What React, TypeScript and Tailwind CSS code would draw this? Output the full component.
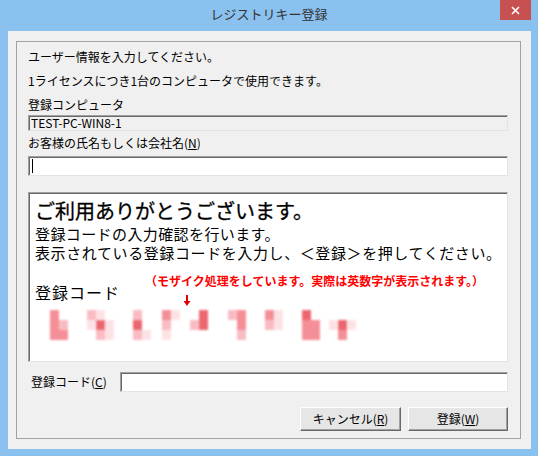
import React from "react"

const D = "#ec6670"
const M = "#f48f98"
const L = "#f9bcc3"
const V = "#fde2e5"

// mosaic glyphs: [x offset, [col, row, colour][]]
const glyphs: [number, [number, number, string][]][] = [
  [6, [[0, 0, M], [0, 1, M], [0, 2, M], [1, 1, L], [1, 2, M]]],
  [43, [[0, 0, L], [1, 0, V], [0, 1, V], [1, 1, D], [2, 1, V], [1, 2, L], [2, 2, V]]],
  [89, [[0, 0, L], [0, 1, D], [0, 2, L], [1, 2, V]]],
  [118, [[0, 0, M], [1, 0, V], [0, 1, L], [0, 2, V]]],
  [146, [[0, 1, L], [1, 0, D], [1, 1, D]]],
  [184, [[0, 0, L], [1, 0, M], [1, 1, M], [1, 2, L]]],
  [221, [[0, 0, M], [1, 0, V], [0, 1, L], [1, 1, V]]],
  [258, [[0, 0, D], [0, 1, M], [0, 2, M], [1, 1, M], [1, 2, M]]],
  [294, [[0, 1, D], [0, 2, M], [-1, 1, V], [1, 1, V]]],
]

function Mosaic() {
  return (
    <svg width="320" height="38" viewBox="0 0 320 38">
      <defs>
        <filter id="soft" x="-10%" y="-30%" width="120%" height="160%">
          <feGaussianBlur stdDeviation="1.2" />
        </filter>
      </defs>
      <g filter="url(#soft)">
        {glyphs.map(([gx, cells]) =>
          cells.map(([c, r, col], i) => (
            <rect key={`${gx}-${i}`} x={gx + c * 9} y={4 + r * 10} width="9" height="10" fill={col} />
          ))
        )}
      </g>
    </svg>
  )
}

const sunken =
  "border border-t-[#a0a0a0] border-l-[#a0a0a0] border-r-[#e3e3e3] border-b-[#e3e3e3] shadow-[inset_1px_1px_0_#696969]"

const button =
  "flex h-[24px] items-center justify-center border border-t-white border-l-white border-r-[#696969] border-b-[#696969] bg-[#e6e6e6] text-[12px] shadow-[inset_-1px_-1px_0_#a0a0a0]"

export default function App() {
  return (
    <div className="flex h-[456px] w-[538px] flex-col bg-[#8ac1ef] font-['Noto_Sans_CJK_JP',sans-serif] text-black">
      {/* title bar */}
      <div className="relative flex h-[31px] shrink-0 items-center justify-center pb-[3px] text-[13px] text-[#333]">
        レジストリキー登録
        <div className="absolute right-[7px] top-0 flex h-[20px] w-[31px] items-center justify-center bg-[#c75050]">
          <svg width="9" height="9" viewBox="0 0 9 9">
            <path d="M1 1 L8 8 M8 1 L1 8" stroke="white" strokeWidth="1.6" />
          </svg>
        </div>
      </div>

      {/* client */}
      <div className="ml-[8px] mr-[7px] h-[418px] bg-[#f0f0f0] pl-[8px] pr-[10px] pt-[10px]">
        <div className="flex h-[398px] flex-col border border-[#a0a0a0] pl-[11px] pr-[12px] text-[12px]">
          <p className="mt-[7px] leading-[16px]">ユーザー情報を入力してください。</p>
          <p className="mt-[8px] leading-[16px]">1ライセンスにつき1台のコンピュータで使用できます。</p>
          <p className="mt-[8px] leading-[16px]">登録コンピュータ</p>
          <div className={`mt-[2px] flex h-[16px] items-center bg-[#f0f0f0] pl-[2px] leading-none ${sunken}`}>
            TEST-PC-WIN8-1
          </div>
          <p className="mt-[4px] leading-[16px]">
            お客様の氏名もしくは会社名(<span className="underline">N</span>)
          </p>
          <div className={`mt-[5px] flex h-[20px] items-center bg-white pl-[3px] ${sunken}`}>
            <div className="h-[14px] w-px bg-black" />
          </div>

          {/* message box */}
          <div className={`mt-[16px] flex h-[170px] flex-col bg-white pl-[6px] pt-[5px] ${sunken}`}>
            <p className="text-[20px] leading-[26px] [-webkit-text-stroke:0.3px_black]">ご利用ありがとうございます。</p>
            <p className="text-[15px] leading-[19px] tracking-[0.4px]">登録コードの入力確認を行います。</p>
            <p className="text-[15px] leading-[19px] tracking-[0.6px]">
              表示されている登録コードを入力し、＜登録＞を押してください。
            </p>
            <div className="mt-[11px] flex">
              <span className="mt-[9px] text-[16px] leading-[20px] tracking-[1px]">登録コード</span>
              <div className="ml-[25px] flex flex-col">
                <span className="text-[12px] font-bold leading-[16px] text-[#ff0000]">
                  （モザイク処理をしています。実際は英数字が表示されます。）
                </span>
                <svg className="ml-[38px] mt-[6px]" width="8" height="11" viewBox="0 0 8 11">
                  <path d="M4 0 V7" stroke="#e00000" strokeWidth="2" />
                  <path d="M0.5 6 L7.5 6 L4 11 Z" fill="#e00000" />
                </svg>
              </div>
            </div>
            <div className="ml-[9px]">
              <Mosaic />
            </div>
          </div>

          {/* code row */}
          <div className="mt-[10px] flex h-[20px] items-center">
            <span className="w-[92px] pl-[3px]">
              登録コード(<span className="underline">C</span>)
            </span>
            <div className={`h-[20px] flex-1 bg-white ${sunken}`} />
          </div>

          {/* buttons */}
          <div className="mt-[15px] flex justify-end gap-[7px]">
            <button className={`${button} w-[101px]`}>
              キャンセル(<span className="underline">R</span>)
            </button>
            <button className={`${button} w-[100px]`}>
              登録(<span className="underline">W</span>)
            </button>
          </div>
        </div>
      </div>
    </div>
  )
}
